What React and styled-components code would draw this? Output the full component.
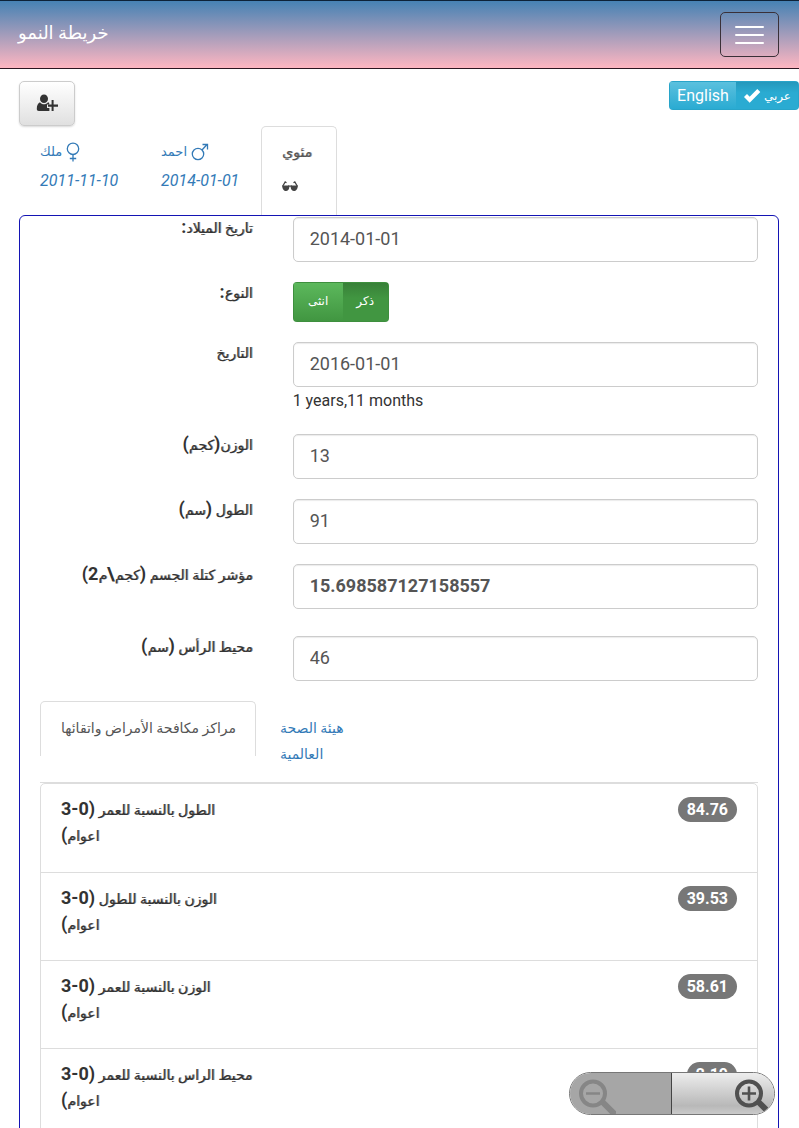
import { useState } from "react";
import styled, { createGlobalStyle } from "styled-components";

const GlobalStyle = createGlobalStyle`
  * {
    box-sizing: border-box;
  }
  html {
    scrollbar-width: none;
  }
  body {
    margin: 0;
    background: #fff;
    color: #333;
    font-family: Roboto, "DejaVu Sans", sans-serif;
    font-size: 16px;
    line-height: 26px;
  }
  button, input {
    font-family: inherit;
  }
`;

const Navbar = styled.header`
  height: 69px;
  padding: 0 20px 0 18px;
  display: flex;
  align-items: center;
  justify-content: space-between;
  border-top: 1px solid #0d2238;
  border-bottom: 1px solid #2c1520;
  background: linear-gradient(to bottom, #4682b4, #ffb6c1);
`;

const Brand = styled.a`
  color: #fff;
  font-size: 18px;
  padding-bottom: 4px;
  text-decoration: none;
`;

const MenuButton = styled.button`
  width: 59px;
  height: 45px;
  padding: 0 14px;
  display: flex;
  flex-direction: column;
  justify-content: center;
  gap: 6px;
  background: transparent;
  border: 1px solid #3a3038;
  border-radius: 5px;
`;

const Bar = styled.span`
  height: 2px;
  border-radius: 1px;
  background: #fff;
`;

const Toolbar = styled.div`
  display: flex;
  justify-content: space-between;
  align-items: flex-start;
  padding: 12px 0 0 19px;
`;

const AddButton = styled.button`
  width: 56px;
  height: 45px;
  padding: 0 0 2px;
  display: flex;
  align-items: center;
  justify-content: center;
  border: 1px solid #ccc;
  border-radius: 5px;
  background: linear-gradient(to bottom, #fff, #e0e0e0);
  box-shadow: 0 1px 2px rgba(0, 0, 0, 0.15);
`;

const ButtonGroup = styled.div`
  display: inline-flex;
  border-radius: 4px;
  overflow: hidden;
`;

const LangButton = styled.button`
  height: 29px;
  padding: 0 7px;
  display: flex;
  align-items: center;
  gap: 3px;
  border: 1px solid #28a4c9;
  border-width: ${(p) => (p.$active ? "1px 1px 1px 0" : "1px 0 1px 1px")};
  color: #fff;
  font-size: ${(p) => (p.$arabic ? "12px" : "16px")};
  background: ${(p) =>
    p.$active
      ? "linear-gradient(to bottom, #2498bc, #2aabd2 40%)"
      : "linear-gradient(to bottom, #5bc0de, #2aabd2)"};
`;

const SexButton = styled.button`
  width: ${(p) => (p.$active ? "46px" : "50px")};
  height: 40px;
  padding: 0 0 3px;
  border: 1px solid #3e8f3e;
  border-width: ${(p) => (p.$active ? "1px 1px 1px 0" : "1px 0 1px 1px")};
  color: #fff;
  font-size: 12px;
  background: ${(p) =>
    p.$active
      ? "linear-gradient(to bottom, #388038, #419641 40%)"
      : "linear-gradient(to bottom, #5cb85c, #419641)"};
`;

const ChildTabs = styled.nav`
  display: flex;
  gap: 3px;
  padding: 0 19px;
`;

const ChildTab = styled.a`
  width: ${(p) => (p.$active ? "76px" : "118px")};
  height: 89px;
  padding: 10px 0 0 20px;
  border: 1px solid ${(p) => (p.$active ? "#ddd" : "transparent")};
  border-bottom: 0;
  border-radius: 5px 5px 0 0;
  color: ${(p) => (p.$active ? "#555" : "#337ab7")};
  white-space: nowrap;
  text-decoration: none;
`;

const ChildName = styled.div`
  height: 29px;
  display: flex;
  align-items: center;
  gap: 4px;
  font-size: ${(p) => (p.$strong ? "14px" : "13px")};
  text-shadow: ${(p) => (p.$strong ? "1px 0 0 rgba(85, 85, 85, 0.6)" : "none")};
`;

const ChildDate = styled.div`
  height: 29px;
  line-height: 29px;
  font-size: 16px;
  font-style: italic;
`;

const GlassesLine = styled.div`
  height: 41px;
  display: flex;
  align-items: center;
`;

const Panel = styled.main`
  margin: 0 20px 20px 19px;
  padding: 1px 0 20px;
  border: 1px solid #1414b4;
  border-radius: 6px;
`;

const FormRow = styled.div`
  display: grid;
  grid-template-columns: 1fr 2fr;
  margin-bottom: ${(p) => (p.$wide ? "27px" : "20px")};
`;

/* thickened regular weight, the bold Arabic face runs too wide */
const Label = styled.label`
  padding: 0 20px;
  line-height: 22px;
  font-size: 14px;
  text-align: right;
  text-shadow: 1px 0 0 rgba(51, 51, 51, 0.6);
`;

const Big = styled.span`
  font-size: 18px;
  font-weight: bold;
  line-height: 18px;
  text-shadow: none;
`;

const Field = styled.div`
  padding: 0 20px;
  min-width: 0;
`;

const Input = styled.input`
  display: block;
  width: 100%;
  height: 45px;
  padding: 0 16px 2px;
  color: #555;
  font-size: 18px;
  font-weight: ${(p) => (p.$bold ? "bold" : "normal")};
  background: #fff;
  border: 1px solid #ccc;
  border-radius: 5px;
  box-shadow: inset 0 1px 1px rgba(0, 0, 0, 0.08);
`;

const Age = styled.div`
  height: 27px;
  line-height: 27px;
`;

const ChartTabs = styled.nav`
  display: flex;
  height: 82px;
  margin: 0 20px;
  border-bottom: 1px solid #ddd;
`;

const ChartTab = styled.a`
  width: ${(p) => (p.$active ? "216px" : "120px")};
  height: 55px;
  padding: 13px 10px 0 20px;
  margin-right: 3px;
  border: 1px solid ${(p) => (p.$active ? "#ddd" : "transparent")};
  border-bottom: 0;
  border-radius: 5px 5px 0 0;
  color: ${(p) => (p.$active ? "#555" : "#337ab7")};
  font-size: 14px;
  text-decoration: none;
`;

const List = styled.ul`
  margin: 0 20px;
  padding: 0;
  list-style: none;
  border: 1px solid #ddd;
  border-radius: 5px;
`;

const Item = styled.li`
  height: 88px;
  padding: 13px 20px;
  display: flex;
  justify-content: space-between;
  align-items: flex-start;
  & + & {
    border-top: 1px solid #ddd;
  }
`;

const ItemTitle = styled.div`
  text-align: left;
  font-size: 14px;
  text-shadow: 1px 0 0 rgba(51, 51, 51, 0.6);
`;

const Badge = styled.span`
  min-width: 50px;
  height: 25px;
  padding: 0 9px;
  line-height: 25px;
  border-radius: 13px;
  color: #fff;
  background: #777;
  font-size: 16px;
  font-weight: bold;
  text-align: center;
`;

/* floats over the page like the browser's own zoom buttons */
const ZoomControl = styled.div`
  position: fixed;
  right: 24px;
  bottom: 13px;
  width: 206px;
  height: 43px;
  display: flex;
  overflow: hidden;
  border: 1px solid #777;
  border-radius: 22px;
`;

const ZoomButton = styled.button`
  width: 50%;
  padding: 0 6px;
  display: flex;
  align-items: center;
  justify-content: ${(p) => (p.$out ? "flex-start" : "flex-end")};
  border: 0;
  border-right: ${(p) => (p.$out ? "1px solid #444" : "0")};
  color: ${(p) => (p.$out ? "#868686" : "#505050")};
  background: ${(p) =>
    p.$out ? "#a6a6a6" : "linear-gradient(to bottom, #ededed, #b8b8b8 80%, #cacaca)"};
  &:last-child {
    padding-right: 2px;
  }
`;

const UserPlusIcon = () => (
  <svg width="22" height="18" viewBox="0 0 22 18" fill="#333" aria-hidden="true">
    <ellipse cx="8" cy="4.8" rx="4" ry="4.3" />
    <path d="M4 8.2C5 9.600 6.500 10.200 8 10.200s3-.6 4-2c.5.200.9.500 1.200.9v1.400H11v3.600h2.400V17H2.800C1.500 17 .8 16.200.8 15c0-3.500 1-6 3.200-6.800z" />
    <path d="M15.600 6h2v4.600H22v2.200h-4.400V17h-2v-4.200H12v-2.200h3.600z" />
  </svg>
);

const CheckIcon = () => (
  <svg width="18" height="16" viewBox="0 0 18 16" fill="none" aria-hidden="true">
    <path d="M2.500 7.500l4.200 4.300L15.800 2.500" stroke="#fff" strokeWidth="4.200" />
  </svg>
);

const FemaleIcon = () => (
  <svg width="14" height="20" viewBox="0 0 14 20" fill="none" stroke="#337ab7" strokeWidth="1.3" aria-hidden="true">
    <circle cx="7" cy="6.800" r="5.700" />
    <path d="M7 12.500v7M3.800 16.500h6.400" />
  </svg>
);

const MaleIcon = () => (
  <svg width="18" height="18" viewBox="0 0 18 18" fill="none" stroke="#337ab7" strokeWidth="1.3" aria-hidden="true">
    <circle cx="7" cy="11" r="5.700" />
    <path d="M11 7l5-5.500M11.500 1.500H16.500V6.500" />
  </svg>
);

const GlassesIcon = () => (
  <svg width="16" height="11" viewBox="0 0 16 11" aria-hidden="true">
    <path d="M0 4.500h7.300v2C7 8.800 5.800 10 4 10S.6 8.800 0 4.500zM8.700 4.500H16C15.400 8.800 13.800 10 12 10S9 8.800 8.700 6.500z" fill="#444" />
    <path d="M.8 5L3.200 1l1.300.8M15.200 5L12.800 1l-1.300.8M6 5.200h4" fill="none" stroke="#444" strokeWidth="1.300" />
  </svg>
);

const ZoomIcon = ({ plus }) => (
  <svg width="40" height="40" viewBox="0 0 40 40" fill="none" stroke="currentColor" aria-hidden="true">
    <path d="M25.500 27L39 40.500" strokeWidth="6" />
    <circle cx="17" cy="19.500" r="12" strokeWidth="4" />
    <path d={plus ? "M10 19.500h14M17 12.500v14" : "M10 19.500h14"} strokeWidth="2.600" />
  </svg>
);

const charts = [
  { name: "الطول بالنسبة للعمر", value: "84.76" },
  { name: "الوزن بالنسبة للطول", value: "39.53" },
  { name: "الوزن بالنسبة للعمر", value: "58.61" },
  { name: "محيط الراس بالنسبة للعمر", value: "2.19" },
];

const App = () => {
  const [birth, setBirth] = useState("2014-01-01");
  const [date, setDate] = useState("2016-01-01");
  const [weight, setWeight] = useState("13");
  const [height, setHeight] = useState("91");
  const [head, setHead] = useState("46");

  return (
    <>
      <GlobalStyle />
      <Navbar>
        <Brand href="#" dir="rtl">خريطة النمو</Brand>
        <MenuButton aria-label="Menu">
          <Bar />
          <Bar />
          <Bar />
        </MenuButton>
      </Navbar>
      <Toolbar>
        <AddButton aria-label="Add child"><UserPlusIcon /></AddButton>
        <ButtonGroup>
          <LangButton>English</LangButton>
          <LangButton $active $arabic><CheckIcon />عربي</LangButton>
        </ButtonGroup>
      </Toolbar>
      <ChildTabs>
        <ChildTab href="#malak">
          <ChildName>ملك <FemaleIcon /></ChildName>
          <ChildDate>2011-11-10</ChildDate>
        </ChildTab>
        <ChildTab href="#ahmed">
          <ChildName>احمد <MaleIcon /></ChildName>
          <ChildDate>2014-01-01</ChildDate>
        </ChildTab>
        <ChildTab href="#percentile" $active>
          <ChildName $strong>مئوي</ChildName>
          <GlassesLine><GlassesIcon /></GlassesLine>
        </ChildTab>
      </ChildTabs>
      <Panel>
        <FormRow>
          <Label htmlFor="birth" dir="rtl">تاريخ الميلاد<Big>:</Big></Label>
          <Field>
            <Input id="birth" value={birth} onChange={(e) => setBirth(e.target.value)} />
          </Field>
        </FormRow>
        <FormRow>
          <Label as="div" id="sex" dir="rtl">النوع<Big>:</Big></Label>
          <Field>
            <ButtonGroup role="group" aria-labelledby="sex">
              <SexButton>انثى</SexButton>
              <SexButton $active>ذكر</SexButton>
            </ButtonGroup>
          </Field>
        </FormRow>
        <FormRow>
          <Label htmlFor="date" dir="rtl">التاريخ</Label>
          <Field>
            <Input id="date" value={date} onChange={(e) => setDate(e.target.value)} />
            <Age>1 years,11 months</Age>
          </Field>
        </FormRow>
        <FormRow>
          <Label htmlFor="weight" dir="rtl">الوزن<Big>(</Big>كجم<Big>)</Big></Label>
          <Field>
            <Input id="weight" value={weight} onChange={(e) => setWeight(e.target.value)} />
          </Field>
        </FormRow>
        <FormRow>
          <Label htmlFor="height" dir="rtl">الطول <Big>(</Big>سم<Big>)</Big></Label>
          <Field>
            <Input id="height" value={height} onChange={(e) => setHeight(e.target.value)} />
          </Field>
        </FormRow>
        <FormRow $wide>
          <Label htmlFor="bmi" dir="rtl">مؤشر كتلة الجسم <Big>(</Big>كجم<Big>\</Big>م<Big>2)</Big></Label>
          <Field>
            <Input id="bmi" $bold readOnly value="15.698587127158557" />
          </Field>
        </FormRow>
        <FormRow>
          <Label htmlFor="head" dir="rtl">محيط الرأس <Big>(</Big>سم<Big>)</Big></Label>
          <Field>
            <Input id="head" value={head} onChange={(e) => setHead(e.target.value)} />
          </Field>
        </FormRow>
        <ChartTabs>
          <ChartTab href="#cdc" $active>مراكز مكافحة الأمراض واتقائها</ChartTab>
          <ChartTab href="#who">هيئة الصحة العالمية</ChartTab>
        </ChartTabs>
        <List>
          {charts.map((c) => (
            <Item key={c.name}>
              <ItemTitle dir="rtl">
                {c.name} <Big>(0-3</Big>
                <br />
                اعوام<Big>)</Big>
              </ItemTitle>
              <Badge>{c.value}</Badge>
            </Item>
          ))}
        </List>
      </Panel>
      <ZoomControl>
        <ZoomButton $out aria-label="Zoom out"><ZoomIcon /></ZoomButton>
        <ZoomButton aria-label="Zoom in"><ZoomIcon plus /></ZoomButton>
      </ZoomControl>
    </>
  );
};

export default App;
